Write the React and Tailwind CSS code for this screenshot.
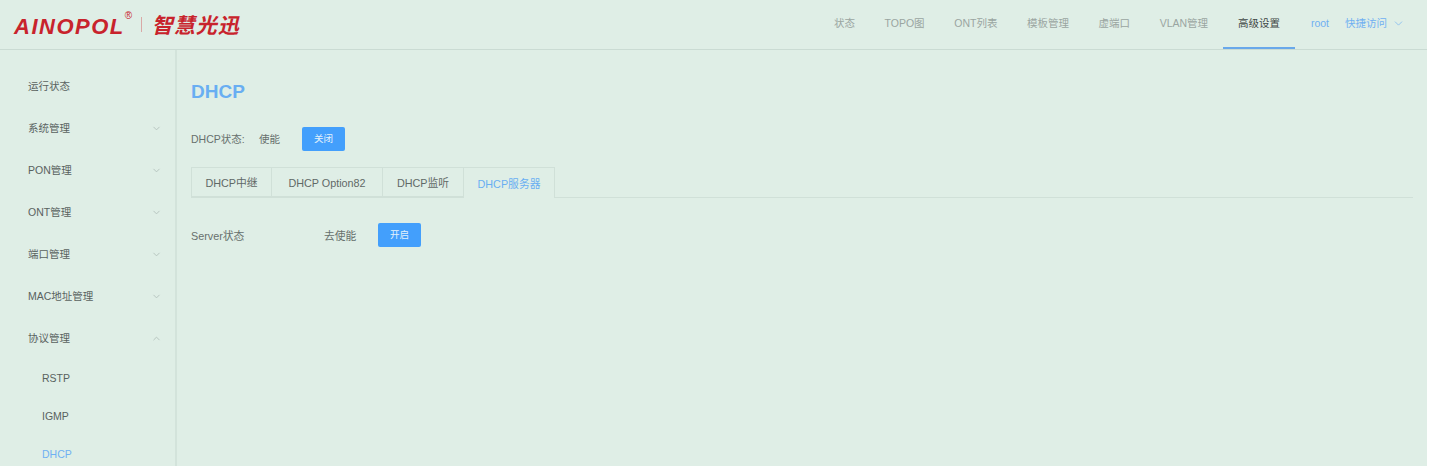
import { ChevronDown, ChevronUp } from "lucide-react";

const CJK = "font-['Liberation_Sans','Noto_Sans_CJK_SC',sans-serif]";

const navItems = ["状态", "TOPO图", "ONT列表", "模板管理", "虚端口", "VLAN管理"];

const menuItems = [
  { label: "运行状态" },
  { label: "系统管理", arrow: "down" },
  { label: "PON管理", arrow: "down" },
  { label: "ONT管理", arrow: "down" },
  { label: "端口管理", arrow: "down" },
  { label: "MAC地址管理", arrow: "down" },
  { label: "协议管理", arrow: "up" },
];

const tabs = [
  { label: "DHCP中继", width: "w-[80px]" },
  { label: "DHCP Option82", width: "w-[111px]" },
  { label: "DHCP监听", width: "w-[81px]" },
];

function Logo() {
  return (
    <div className="flex items-center pl-[14px] text-[#c8232c]">
      <span className="relative mt-[4px] text-[22px] leading-none font-bold italic tracking-[1.5px] font-['Liberation_Sans',sans-serif]">
        AINOPOL
        <sup className="absolute left-full top-0 text-[10px] not-italic font-normal tracking-normal">®</sup>
      </span>
      <span className="ml-[16px] h-[15px] w-px bg-[#d9a9a6]" />
      <span className="ml-[10px] text-[21px] leading-none font-bold italic tracking-[1px] font-['Noto_Sans_CJK_SC',sans-serif]">
        智慧光迅
      </span>
    </div>
  );
}

function Header() {
  return (
    <header className="flex h-[50px] items-stretch justify-between border-b border-[#cadbd3]">
      <Logo />
      <nav className="flex items-stretch pr-[22px] text-[10.5px] text-[#9aa5a1]">
        {navItems.map((item) => (
          <div key={item} className="flex items-center justify-center px-[14.8px] pb-[2px]">
            {item}
          </div>
        ))}
        <div className="flex w-[72px] items-center justify-center border-b-2 border-[#69a8ea] text-[#3f4745]">
          高级设置
        </div>
        <div className="ml-[16px] flex items-center pb-[2px] text-[#6fb0f2]">root</div>
        <div className="ml-[16px] flex items-center gap-[5px] pb-[2px] text-[#6fb0f2]">
          快捷访问
          <ChevronDown className="h-[13px] w-[13px] stroke-[1.25]" />
        </div>
      </nav>
    </header>
  );
}

function Sidebar() {
  return (
    <aside className="w-[177px] shrink-0 border-r-2 border-[#d3e3db] pt-[15px] text-[10.5px] text-[#59625f]">
      {menuItems.map((item) => (
        <div key={item.label} className="flex h-[42px] items-center justify-between pl-[28px] pr-[13px]">
          <span className="pt-[2px]">{item.label}</span>
          {item.arrow === "down" && <ChevronDown className="h-[11px] w-[11px] text-[#b4c2bc]" />}
          {item.arrow === "up" && <ChevronUp className="h-[11px] w-[11px] text-[#b4c2bc]" />}
        </div>
      ))}
      <div className="flex h-[38px] items-center pl-[42px] pt-[2px]">RSTP</div>
      <div className="flex h-[38px] items-center pl-[42px] pt-[2px]">IGMP</div>
      <div className="flex h-[37px] items-center pl-[42px] pt-[2px] text-[#6fb0f2]">DHCP</div>
    </aside>
  );
}

function BlueButton({ children }) {
  return (
    <button className="h-[24px] w-[43px] rounded-[2px] bg-[#439ffc] text-[9.5px] text-[#e3f1fb]">
      {children}
    </button>
  );
}

function Content() {
  return (
    <main className="flex-1 pl-[14px] pr-[14px]">
      <h1 className="mt-[30px] h-[24px] text-[19px] leading-[24px] font-bold text-[#69aef2]">DHCP</h1>

      <div className="mt-[23px] flex h-[24px] items-center text-[10.5px] text-[#67706d]">
        <span className="w-[68px] pt-[2px]">DHCP状态:</span>
        <span className="w-[43px] pt-[2px]">使能</span>
        <BlueButton>关闭</BlueButton>
      </div>

      <div className="mt-[16px] flex h-[31px] border-b border-[#d0e0d8] text-[10.8px] text-[#5f6966]">
        {tabs.map((tab) => (
          <div
            key={tab.label}
            className={`flex h-[30px] items-center justify-center border-y border-l border-[#d0e0d8] pt-[2px] ${tab.width}`}
          >
            {tab.label}
          </div>
        ))}
        <div className="flex h-[31px] w-[92px] items-center justify-center border-x border-t border-[#d0e0d8] bg-[#dfeee6] pt-[2px] text-[#69aef2]">
          DHCP服务器
        </div>
      </div>

      <div className="mt-[25px] flex h-[24px] items-center text-[10.8px] text-[#67706d]">
        <span className="w-[133px] pt-[2px]">Server状态</span>
        <span className="w-[54px] pt-[2px]">去使能</span>
        <BlueButton>开启</BlueButton>
      </div>
    </main>
  );
}

export default function App() {
  return (
    <div className={`flex h-[466px] w-[1430px] overflow-hidden bg-white ${CJK}`}>
      <div className="flex w-[1427px] flex-col bg-[#dfeee6]">
        <Header />
        <div className="flex min-h-0 flex-1">
          <Sidebar />
          <Content />
        </div>
      </div>
    </div>
  );
}
